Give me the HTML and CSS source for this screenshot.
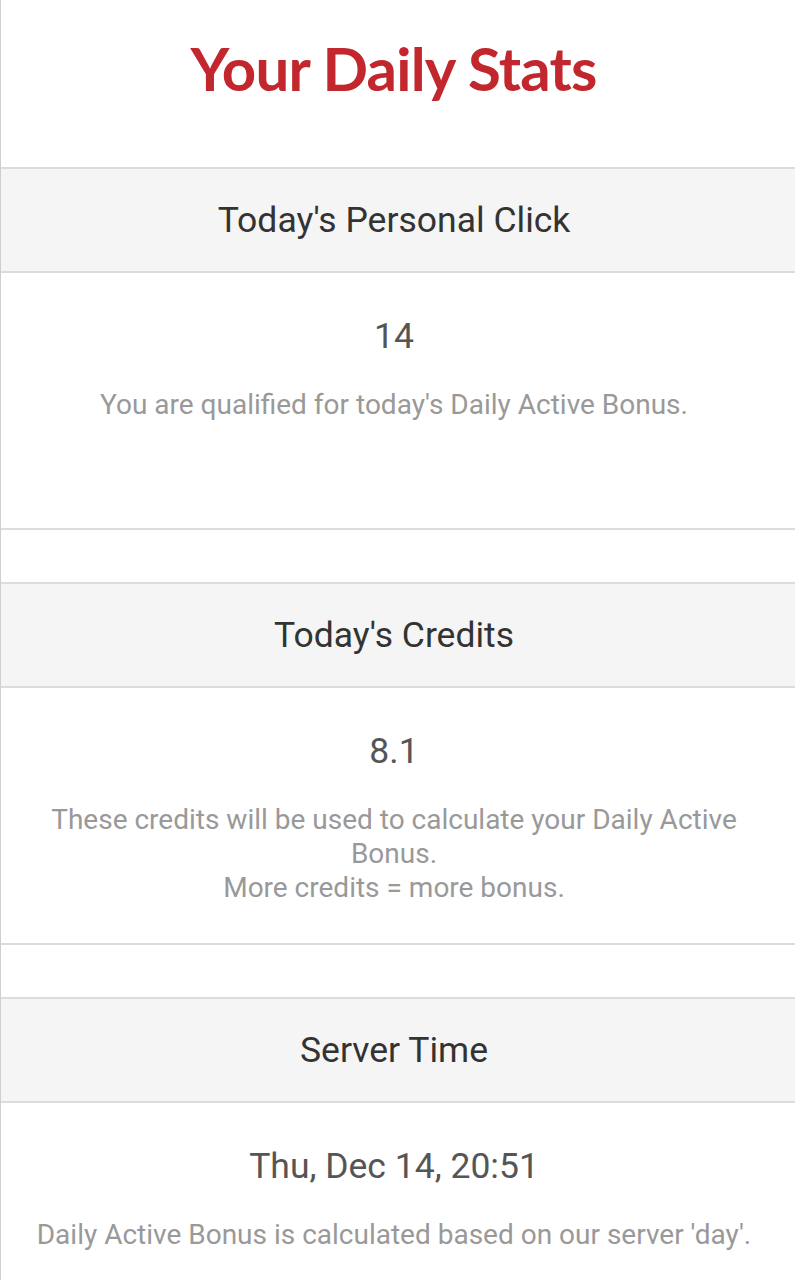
FILE: index.html
```html
<!DOCTYPE html>
<html lang="en">
<head>
    <meta charset="UTF-8">
    <meta name="viewport" content="width=device-width, initial-scale=1.0">
    <title>Your Daily Stats</title>
    <link rel="stylesheet" href="styles.css">
</head>
<body>
    <div class="page">
        <h1 class="title">Your Daily Stats</h1>

        <div class="stat">
            <div class="stat-head">Today's Personal Click</div>
            <div class="stat-body">
                <div class="stat-value">14</div>
                <p class="stat-note">You are qualified for today's Daily Active Bonus.</p>
            </div>
        </div>

        <div class="stat">
            <div class="stat-head">Today's Credits</div>
            <div class="stat-body">
                <div class="stat-value">8.1</div>
                <p class="stat-note">These credits will be used to calculate your Daily Active Bonus.<br>More credits = more bonus.</p>
            </div>
        </div>

        <div class="stat">
            <div class="stat-head">Server Time</div>
            <div class="stat-body">
                <div class="stat-value">Thu, Dec 14, 20:51</div>
                <p class="stat-note">Daily Active Bonus is calculated based on our server 'day'.</p>
            </div>
        </div>
    </div>
</body>
</html>
```

FILE: styles.css
```css
body {
    margin: 0;
    background-color: #fff;
    font-family: Roboto, "Noto Sans", Arial, sans-serif;
    overflow: hidden;
}

.page {
    min-height: 1280px;
    border-left: 1.5px solid #cfcfcf;
}

.title {
    margin: 0;
    height: 167px;
    padding: 28px 9px 0 0;
    box-sizing: border-box;
    text-align: center;
    font-family: Lato, "Open Sans", sans-serif;
    font-weight: 700;
    font-size: 60px;
    line-height: 80px;
    letter-spacing: -0.8px;
    color: #c1272d;
}

.stat {
    margin-bottom: 52px;
}

.stat-head {
    height: 106px;
    box-sizing: border-box;
    padding-right: 8px;
    display: flex;
    justify-content: center;
    align-items: center;
    background-color: #f5f5f5;
    border-top: 2px solid #dcdcdc;
    border-bottom: 2px solid #dcdcdc;
    font-size: 35.5px;
    color: #333;
}

.stat-body {
    min-height: 257px;
    box-sizing: border-box;
    padding: 40px 38px 20px 30px;
    border-bottom: 2px solid #dcdcdc;
    text-align: center;
}

.stat-value {
    font-size: 35.5px;
    line-height: 46px;
    color: #555;
}

.stat-note {
    margin: 29px 0 0;
    font-size: 28px;
    line-height: 34px;
    color: #999;
}
```
